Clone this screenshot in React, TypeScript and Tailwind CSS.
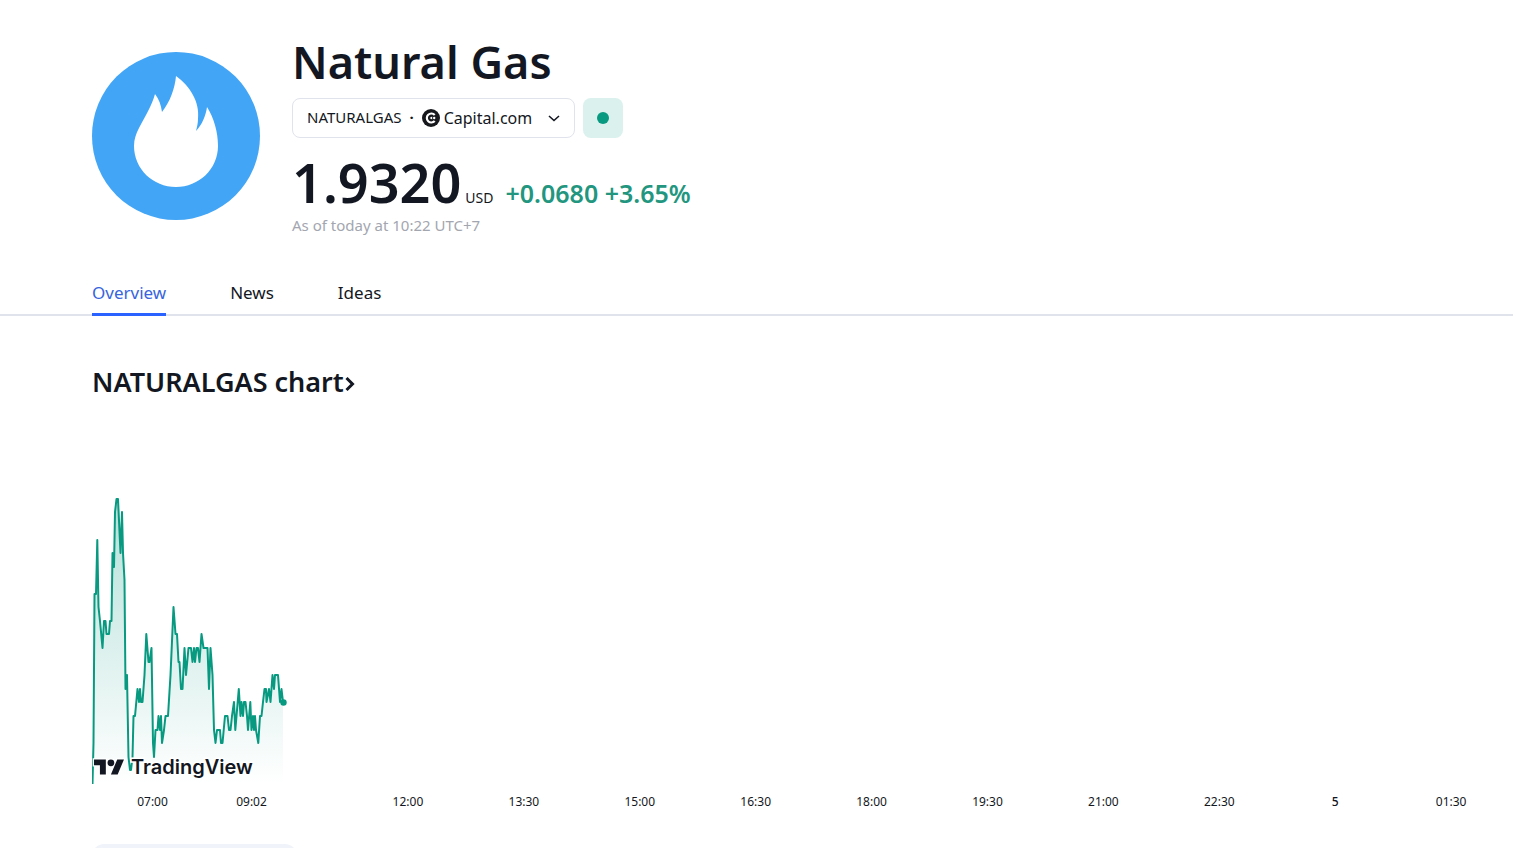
import React from 'react';

const LINE =
  'M.5 294L1.5 253L2.5 104L4 104L5.3 50L6.5 117L8 131L10.5 158L12 131L13.5 131L14.5 144L17 144L18 131L19.5 131L20.5 63L22 77L23 22L24.5 9L26 9L28.5 63L30 22L31 63L32.5 90L33.5 199L35 185L36.5 267L38 280L39 280L40.5 267L41.5 226L43 226L45.5 199L47 212L48 199L49 212L50.5 212L52.5 185L54.3 144L56.5 172L57.5 172L59.5 158L61 253L62 267L63.5 240L65.5 240L66.5 226L68 240L69 226L70 253L72 240L73.5 226L76 226L78.5 185L81.5 117L83.5 144L85 144L86.5 172L87.5 172L89 199L90.5 199L92.5 158L94 185L96.5 158L99 158L100.5 172L102 158L103 172L104.5 158L106 158L107.5 172L109.5 144L111.5 158L115.5 158L117 199L118.5 158L120.5 185L122 240L123.5 253L125 240L128 240L129 253L130.5 253L133 226L135.5 226L137 240L138.5 240L140 226L142 212L143.3 240L146.8 199L148.5 226L149.5 212L151 226L152 212L153.5 212L155 226L156 240L158.3 212L159.5 240L161 226L162 240L163 226L164 240L166.3 253L168 226L169.5 226L171 212L172.5 199L174 199L174.5 212L177 199L178.5 212L180.5 185L182 199L183 185L186 185L188 212L189.5 199L191 212';

const tabs = ['Overview', 'News', 'Ideas'];
const hours = ['12:00', '13:30', '15:00', '16:30', '18:00', '19:30', '21:00', '22:30', '5', '01:30'];

function GasLogo() {
  return (
    <svg className="size-[168px] shrink-0" viewBox="0 0 168 168" aria-hidden="true">
      <circle cx="84" cy="84" r="84" fill="#42a5f5" />
      <path
        fill="#fff"
        d="M84 24C98 34 108 50 106 67C106 71 105 75 104 79C110 73 114 63 115 55C122 66 126 80 126 94C126 117 107 135 84 135C61 135 42 117 42 94C42 87 44 82 47 76C53 65 60 53 63 42C67 47 69 53 70 60C78 50 83 36 84 24Z"
      />
    </svg>
  );
}

function SymbolHeader() {
  return (
    <header className="flex pl-[92px] pt-9">
      <div className="pt-4">
        <GasLogo />
      </div>
      <div className="ml-8">
        <h1 className="text-[45px] leading-[52px] font-semibold">Natural Gas</h1>
        <div className="mt-[10px] flex gap-2">
          <button className="flex h-10 items-center rounded-lg border border-[#e0e3eb] px-[14px] pb-px text-[15px]">
            <span>NATURALGAS</span>
            <span className="mx-2 font-bold">·</span>
            <svg className="mr-1 size-[18px]" viewBox="0 0 18 18" aria-hidden="true">
              <circle cx="9" cy="9" r="9" fill="#17181c" />
              <path d="M12.7 6A4.5 4.5 0 1 0 12.7 12" fill="none" stroke="#fff" strokeWidth="2.2" />
              <path d="M7.5 9L10.2 7.5V10.5Z" fill="#fff" />
              <circle cx="12.2" cy="9" r="1.2" fill="#fff" />
            </svg>
            <span className="text-base">Capital.com</span>
            <svg className="ml-4 size-3" viewBox="0 0 12 12" fill="none" aria-hidden="true">
              <path d="M1 4L6 8.5L11 4" stroke="#131722" strokeWidth="1.6" />
            </svg>
          </button>
          <button aria-label="Market open" className="flex size-10 items-center justify-center rounded-lg bg-[#daf1ed]">
            <span className="size-3 rounded-full bg-[#089981]" />
          </button>
        </div>
        <div className="mt-[14px] flex items-baseline">
          <span className="text-[54px] leading-[60px] font-semibold">1.9320</span>
          <span className="ml-1 text-sm">USD</span>
          <span className="ml-3 text-[25px] leading-8 font-semibold text-[#22967e]">+0.0680 +3.65%</span>
        </div>
        <p className="mt-px text-[15px] leading-6 text-[#a3a6af]">As of today at 10:22 UTC+7</p>
      </div>
    </header>
  );
}

function Tabs() {
  return (
    <nav className="mt-8 flex gap-16 border-b-2 border-[#e0e3eb] pl-[92px]">
      {tabs.map((tab, i) => (
        <a
          key={tab}
          href="#"
          className={
            i === 0
              ? '-mb-[2px] border-b-3 border-[#2962ff] pt-3 pb-2 text-[17px] leading-6 text-[#3864dd]'
              : 'pt-3 pb-2 text-[17px] leading-6'
          }
        >
          {tab}
        </a>
      ))}
    </nav>
  );
}

function Chart() {
  return (
    <section>
      <h2 className="mt-12 pl-[92px] text-[27px] leading-9 font-semibold">
        <a href="#" className="inline-flex items-center">
          NATURALGAS chart
          <svg className="mt-1 ml-px h-4 w-[10px]" viewBox="0 0 10 16" fill="none" aria-hidden="true">
            <path d="M1.5 2L7.5 8L1.5 14" stroke="#131722" strokeWidth="3" />
          </svg>
        </a>
      </h2>
      <div className="relative mt-[90px] pl-[92px]">
        <svg className="block h-[295px] w-[200px]" viewBox="0 0 200 295" aria-hidden="true">
          <defs>
            <linearGradient id="area" x1="0" y1="0" x2="0" y2="1">
              <stop offset="0" stopColor="#089981" stopOpacity="0.3" />
              <stop offset="1" stopColor="#089981" stopOpacity="0" />
            </linearGradient>
          </defs>
          <path d={`${LINE}V294H0Z`} fill="url(#area)" />
          <path d={LINE} fill="none" stroke="#089981" strokeWidth="2" strokeLinejoin="round" />
          <circle cx="191.5" cy="212.5" r="3.2" fill="#089981" />
        </svg>
        <a href="#" className="absolute bottom-[6px] left-[93px] flex items-center text-[#131722]">
          <svg className="h-[18px] w-8 overflow-visible" viewBox="-1.2 2.35 37.9 21.3" aria-hidden="true">
            <path
              d="M14 22H7V11H0V4H14ZM28 22H20L27.5 4H35.5ZM24 8A4 4 0 1 1 16 8A4 4 0 1 1 24 8Z"
              fill="#131722"
              stroke="#fff"
              strokeWidth="3"
              paintOrder="stroke"
            />
          </svg>
          <span className='ml-[6px] font-["Inter",sans-serif] text-[20px] leading-6 font-semibold [paint-order:stroke] [-webkit-text-stroke:3px_#fff]'>
            TradingView
          </span>
        </a>
      </div>
      <div className="mt-[9px] flex pl-[92px] pr-1 text-center text-xs">
        <span className="w-[121px]">07:00</span>
        <span className="mr-[60px] w-[77px]">09:02</span>
        {hours.map((h) => (
          <span key={h} className={h === '5' ? 'flex-1 font-medium' : 'flex-1'}>{h}</span>
        ))}
      </div>
    </section>
  );
}

export default function App() {
  return (
    <main className='h-screen overflow-hidden bg-white font-["Noto_Sans",sans-serif] text-[#131722]'>
      <SymbolHeader />
      <Tabs />
      <Chart />
      <div className="mt-[34px] ml-[92px] h-16 w-[205px] rounded-xl bg-[#f0f3fa]" />
    </main>
  );
}
